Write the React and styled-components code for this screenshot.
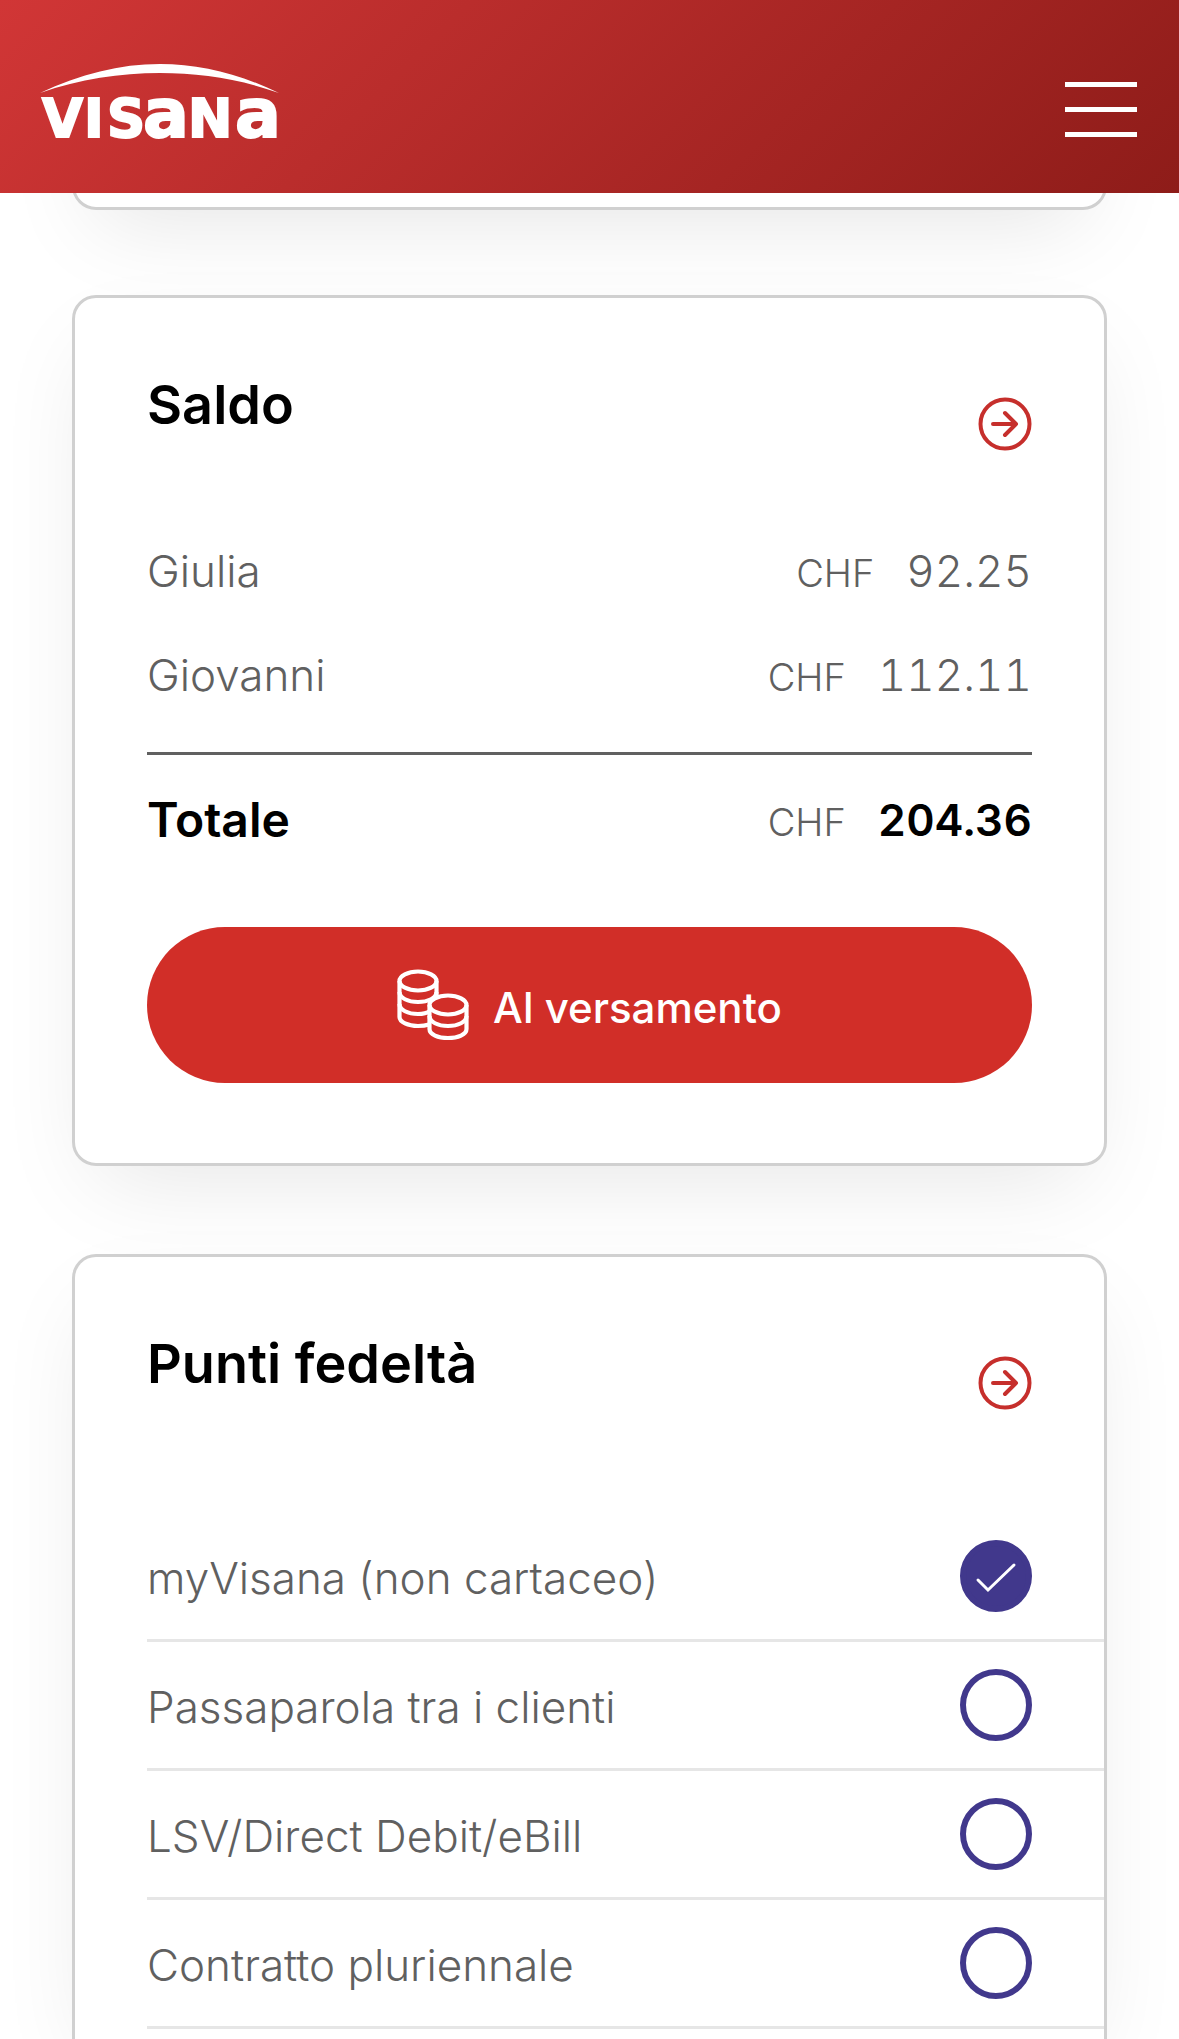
import React, { useState } from 'react'
import styled, { createGlobalStyle } from 'styled-components'

const APP_TITLE = 'Visana'

const BALANCES = [
  { name: 'Giulia', amount: '92.25' },
  { name: 'Giovanni', amount: '112.11' },
]

const POINTS = [
  { id: 'paperless', label: 'myVisana (non cartaceo)', done: true },
  { id: 'referral', label: 'Passaparola tra i clienti', done: false },
  { id: 'debit', label: 'LSV/Direct Debit/eBill', done: false },
  { id: 'contract', label: 'Contratto pluriennale', done: false },
]

const VisanaLogo = () => (
  <LogoSvg viewBox="0 0 240 96" aria-hidden="true">
    <path d="M0 31 C40 12 80 2 120 2 S200 12 239 31 C200 17 160 11 120 11 S40 17 0 31Z" />
    <text y="75">
      <tspan x="2">V</tspan>
      <tspan x="44">I</tspan>
      <tspan x="67">S</tspan>
      <LogoBig x="103">a</LogoBig>
      <tspan x="148">N</tspan>
      <LogoBig x="195">a</LogoBig>
    </text>
  </LogoSvg>
)

const ArrowIcon = () => (
  <svg width="54" height="54" viewBox="0 0 54 54" fill="none" stroke="#c62f2c" strokeWidth="4" strokeLinecap="round" strokeLinejoin="round" aria-hidden="true">
    <circle cx="27" cy="27" r="24.5" />
    <path d="M15 27H38M27 16L38 27L27 38" />
  </svg>
)

const CoinsIcon = () => (
  <svg width="72" height="72" viewBox="0 0 72 72" fill="none" stroke="#fff" strokeWidth="4.2" aria-hidden="true">
    <ellipse cx="21" cy="12" rx="18.5" ry="9.5" />
    <path d="M2.500 12V48C2.500 53 11 57 21 57C25 57 29 56.500 32 55.500" />
    <path d="M39.500 12V27" />
    <path d="M2.500 23C2.500 29 11 33 21 33S39.500 29 39.500 23" />
    <path d="M2.500 35C2.500 41 11 45 21 45C26 45 30 44 33 42" />
    <ellipse cx="51" cy="36" rx="18.5" ry="9.5" />
    <path d="M32.500 36V60C32.500 65.500 41 69 51 69S69.500 65.500 69.500 60V36" />
    <path d="M32.500 47C32.500 53 41 57 51 57S69.500 53 69.500 47" />
  </svg>
)

const CheckIcon = () => (
  <svg width="72" height="72" viewBox="0 0 72 72" fill="none" stroke="#fff" strokeWidth="3" strokeLinecap="round" aria-hidden="true">
    <path d="M18 40L28 50L54 25" />
  </svg>
)

const CardHeader = ({ title }) => (
  <CardHead>
    <Title>{title}</Title>
    <MoreLink href="#" aria-label={title}><ArrowIcon /></MoreLink>
  </CardHead>
)

const App = () => {
  const [points, setPoints] = useState(POINTS)

  const toggle = (id) => {
    setPoints(points.map((p) => (p.id === id ? { ...p, done: !p.done } : p)))
  }

  return (
    <Page>
      <GlobalStyle />
      <Header>
        <Logo href="#" aria-label={APP_TITLE}><VisanaLogo /></Logo>
        <MenuButton type="button" aria-label="Menu">
          <Bar /><Bar /><Bar />
        </MenuButton>
      </Header>

      <Main>
        <ScrolledCard />

        <Card>
          <CardHeader title="Saldo" />
          <Balance>
            <tbody>
              {BALANCES.map((b) => (
                <tr key={b.name}>
                  <Name scope="row">{b.name}</Name>
                  <Amount><Currency>CHF</Currency>{b.amount}</Amount>
                </tr>
              ))}
            </tbody>
            <tfoot>
              <tr>
                <Name scope="row" $total>Totale</Name>
                <Amount $total><Currency>CHF</Currency>204.36</Amount>
              </tr>
            </tfoot>
          </Balance>
          <PayButton type="button">
            <CoinsIcon />
            <PayLabel>Al versamento</PayLabel>
          </PayButton>
        </Card>

        <Card $open>
          <CardHeader title="Punti fedeltà" />
          <PointList>
            {points.map((p) => (
              <PointItem key={p.id}>
                <PointLabel htmlFor={p.id}>{p.label}</PointLabel>
                <Tick>
                  <Checkbox id={p.id} type="checkbox" checked={p.done} onChange={() => toggle(p.id)} />
                  {p.done && <CheckIcon />}
                </Tick>
              </PointItem>
            ))}
          </PointList>
        </Card>
      </Main>
    </Page>
  )
}

export default App

const GlobalStyle = createGlobalStyle`
  *, *::before, *::after {
    box-sizing: border-box;
  }

  body {
    margin: 0;
    background: #fff;
    color: #000;
    font-family: Inter, "Liberation Sans", sans-serif;
  }
`

const Page = styled.div`
  display: flex;
  flex-direction: column;
  min-height: 100vh;
`

const Header = styled.header`
  position: sticky;
  top: 0;
  z-index: 1;
  display: flex;
  justify-content: space-between;
  align-items: center;
  padding: 62px 42px 35px 40px;
  background: linear-gradient(135deg, #d13636, #8e1c19);
`

const Logo = styled.a`
  display: block;
`

const LogoSvg = styled.svg`
  display: block;
  width: 240px;
  height: 96px;
  fill: #fff;
  font-family: "DejaVu Sans", sans-serif;
  font-size: 53px;
  font-weight: 700;

  text {
    stroke: #fff;
    stroke-width: 2px;
  }
`

const LogoBig = styled.tspan`
  font-size: 68px;
`

const MenuButton = styled.button`
  display: flex;
  flex-direction: column;
  gap: 20px;
  width: 72px;
  padding: 0;
  margin-bottom: 1px;
  border: 0;
  background: none;
  cursor: pointer;
`

const Bar = styled.span`
  height: 5px;
  background: #fff;
`

const Main = styled.main`
  flex: 1;
  display: flex;
  flex-direction: column;
  padding: 0 72px;
`

const Card = styled.section`
  padding: 72px 72px ${(props) => (props.$open ? '0' : '80px')};
  border: 3px solid #d0d0d0;
  border-radius: 24px;
  background: #fff;
  box-shadow: 0 36px 90px -24px rgba(0, 0, 0, .1);

  & + & {
    margin-top: 88px;
  }

  ${(props) => props.$open && `
    flex: 1;
    border-bottom: 0;
    border-radius: 24px 24px 0 0;
  `}
`

/* end of the card that is scrolled under the header */
const ScrolledCard = styled.div`
  height: 200px;
  margin: -183px 0 85px;
  border: 3px solid #d0d0d0;
  border-radius: 24px;
  background: #fff;
  box-shadow: 0 36px 90px -24px rgba(0, 0, 0, .1);
`

const CardHead = styled.div`
  display: flex;
  justify-content: space-between;
  height: 81px;
`

const Title = styled.h2`
  margin: 0;
  font-size: 54px;
  font-weight: 600;
  line-height: 70px;
`

const MoreLink = styled.a`
  display: flex;
  align-self: flex-end;
`

const Balance = styled.table`
  width: 100%;
  margin-top: 67px;
  border-collapse: collapse;
  font-variant-numeric: tabular-nums;

  tr {
    height: 105px;
  }

  tbody tr:last-child {
    height: 130px;
  }

  tbody tr:last-child > * {
    padding-bottom: 25px;
  }

  tfoot tr {
    height: 132px;
    border-top: 3px solid #606060;
  }
`

const Name = styled.th`
  padding: 0;
  color: ${(props) => (props.$total ? '#000' : '#606060')};
  font-size: ${(props) => (props.$total ? '48px' : '44px')};
  font-weight: ${(props) => (props.$total ? 600 : 300)};
  text-align: left;
`

const Amount = styled.td`
  padding: 0;
  color: ${(props) => (props.$total ? '#000' : '#606060')};
  font-size: 44px;
  font-weight: ${(props) => (props.$total ? 600 : 300)};
  text-align: right;
`

const Currency = styled.span`
  margin-right: 32px;
  color: #606060;
  font-size: 38px;
  font-weight: 300;
`

const PayButton = styled.button`
  display: flex;
  justify-content: center;
  align-items: center;
  gap: 24px;
  width: 100%;
  height: 156px;
  margin-top: 42px;
  border: 0;
  border-radius: 78px;
  background: #d12e28;
  color: #fff;
  font-family: inherit;
  font-size: 42px;
  font-weight: 500;
  cursor: pointer;
`

const PayLabel = styled.span`
  padding-top: 5px;
`

const PointList = styled.ul`
  margin: 103px -72px 0 0;
  padding: 0;
  list-style: none;
`

const PointItem = styled.li`
  display: flex;
  justify-content: space-between;
  align-items: center;
  padding: 27px 72px 27px 0;
  border-bottom: 3px solid #e6e6e6;
`

const PointLabel = styled.label`
  padding-top: 4px;
  color: #606060;
  font-size: 44px;
  font-weight: 300;
`

const Tick = styled.span`
  display: grid;

  & > * {
    grid-area: 1 / 1;
  }

  svg {
    pointer-events: none;
  }
`

const Checkbox = styled.input`
  appearance: none;
  width: 72px;
  height: 72px;
  margin: 0;
  border: 6px solid #41388c;
  border-radius: 50%;
  cursor: pointer;

  &:checked {
    background: #41388c;
  }
`
